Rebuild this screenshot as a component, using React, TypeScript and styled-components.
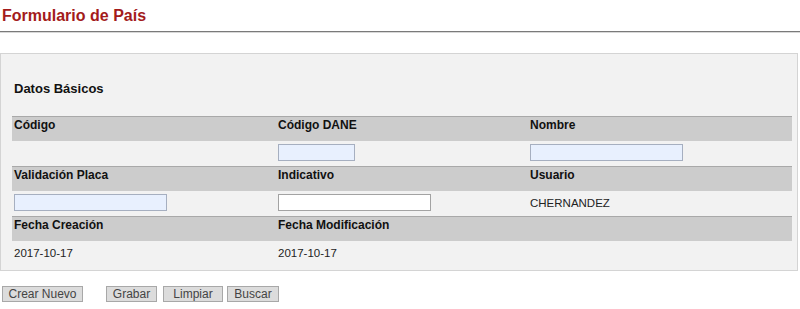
import React from "react";
import styled, { createGlobalStyle } from "styled-components";

const Global = createGlobalStyle`
  html, body { margin: 0; padding: 0; background: #ffffff; }
  body { font-family: "Liberation Sans", Arial, sans-serif; color: #222; }
`;

const Page = styled.div`
  width: 800px;
`;

const Title = styled.h1`
  margin: 6px 0 0 2px;
  font-size: 16px;
  line-height: 19px;
  font-weight: bold;
  color: #a31b1b;
`;

const Rule = styled.div`
  margin-top: 6px;
  height: 0;
  border-top: 1px solid #7a7a7a;
  border-bottom: 1px solid #d8d8d8;
`;

const Panel = styled.section`
  margin: 20px 2px 0 0;
  background: #f2f2f2;
  border: 1px solid #d4d4d4;
  padding: 27px 0 4px 11px;
`;

const SectionTitle = styled.h2`
  margin: 0 0 20px 2px;
  font-size: 13px;
  line-height: 15px;
  font-weight: bold;
  color: #111;
`;

const Table = styled.div`
  display: grid;
  grid-template-columns: 264px 252px 264px;
`;

const Row = styled.div`
  display: contents;
`;

const Cell = styled.div<{ $header?: boolean; $input?: boolean }>`
  box-sizing: border-box;
  height: 25px;
  padding-left: 2px;
  display: flex;
  align-items: ${(p) => (p.$header || p.$input ? "flex-start" : "center")};
  padding-top: ${(p) => (p.$header ? "1px" : p.$input ? "3px" : "0")};
  background: ${(p) => (p.$header ? "#cccccc" : "transparent")};
  border-top: ${(p) => (p.$header ? "1px solid #a9a9a9" : "none")};
  font-size: ${(p) => (p.$header ? "12px" : "11.5px")};
  line-height: ${(p) => (p.$header ? "14px" : "13px")};
  font-weight: ${(p) => (p.$header ? "bold" : "normal")};
  color: ${(p) => (p.$header ? "#111" : "#222")};
`;

const TextInput = styled.input<{ $w: number; $plain?: boolean }>`
  box-sizing: border-box;
  width: ${(p) => p.$w}px;
  height: 17px;
  margin: 0;
  padding: 0 2px;
  border: 1px solid ${(p) => (p.$plain ? "#a3a3a3" : "#a6afc0")};
  background: ${(p) => (p.$plain ? "#ffffff" : "#e8f0fe")};
  font-family: "Liberation Sans", Arial, sans-serif;
  font-size: 11px;
  outline: none;
`;

const Buttons = styled.div`
  display: flex;
  align-items: center;
  margin: 15px 0 0 2px;
`;

const Button = styled.button<{ $w: number; $ml?: number }>`
  box-sizing: border-box;
  width: ${(p) => p.$w}px;
  height: 16px;
  margin: 0 0 0 ${(p) => p.$ml ?? 0}px;
  padding: 0;
  background: #dcdcdc;
  border: 1px solid #a8a8a8;
  color: #444;
  font-family: "Liberation Sans", Arial, sans-serif;
  font-size: 12px;
  line-height: 14px;
  cursor: pointer;
`;

export default function App() {
  return (
    <Page>
      <Global />
      <Title>Formulario de País</Title>
      <Rule />
      <Panel>
        <SectionTitle>Datos Básicos</SectionTitle>
        <Table>
          <Row>
            <Cell $header>Código</Cell>
            <Cell $header>Código DANE</Cell>
            <Cell $header>Nombre</Cell>
          </Row>
          <Row>
            <Cell $input />
            <Cell $input>
              <TextInput $w={77} />
            </Cell>
            <Cell $input>
              <TextInput $w={153} />
            </Cell>
          </Row>
          <Row>
            <Cell $header>Validación Placa</Cell>
            <Cell $header>Indicativo</Cell>
            <Cell $header>Usuario</Cell>
          </Row>
          <Row>
            <Cell $input>
              <TextInput $w={153} />
            </Cell>
            <Cell $input>
              <TextInput $w={153} $plain />
            </Cell>
            <Cell>CHERNANDEZ</Cell>
          </Row>
          <Row>
            <Cell $header>Fecha Creación</Cell>
            <Cell $header>Fecha Modificación</Cell>
            <Cell $header />
          </Row>
          <Row>
            <Cell>2017-10-17</Cell>
            <Cell>2017-10-17</Cell>
            <Cell />
          </Row>
        </Table>
      </Panel>
      <Buttons>
        <Button $w={81}>Crear Nuevo</Button>
        <Button $w={51} $ml={23}>Grabar</Button>
        <Button $w={60} $ml={6}>Limpiar</Button>
        <Button $w={52} $ml={4}>Buscar</Button>
      </Buttons>
    </Page>
  );
}
